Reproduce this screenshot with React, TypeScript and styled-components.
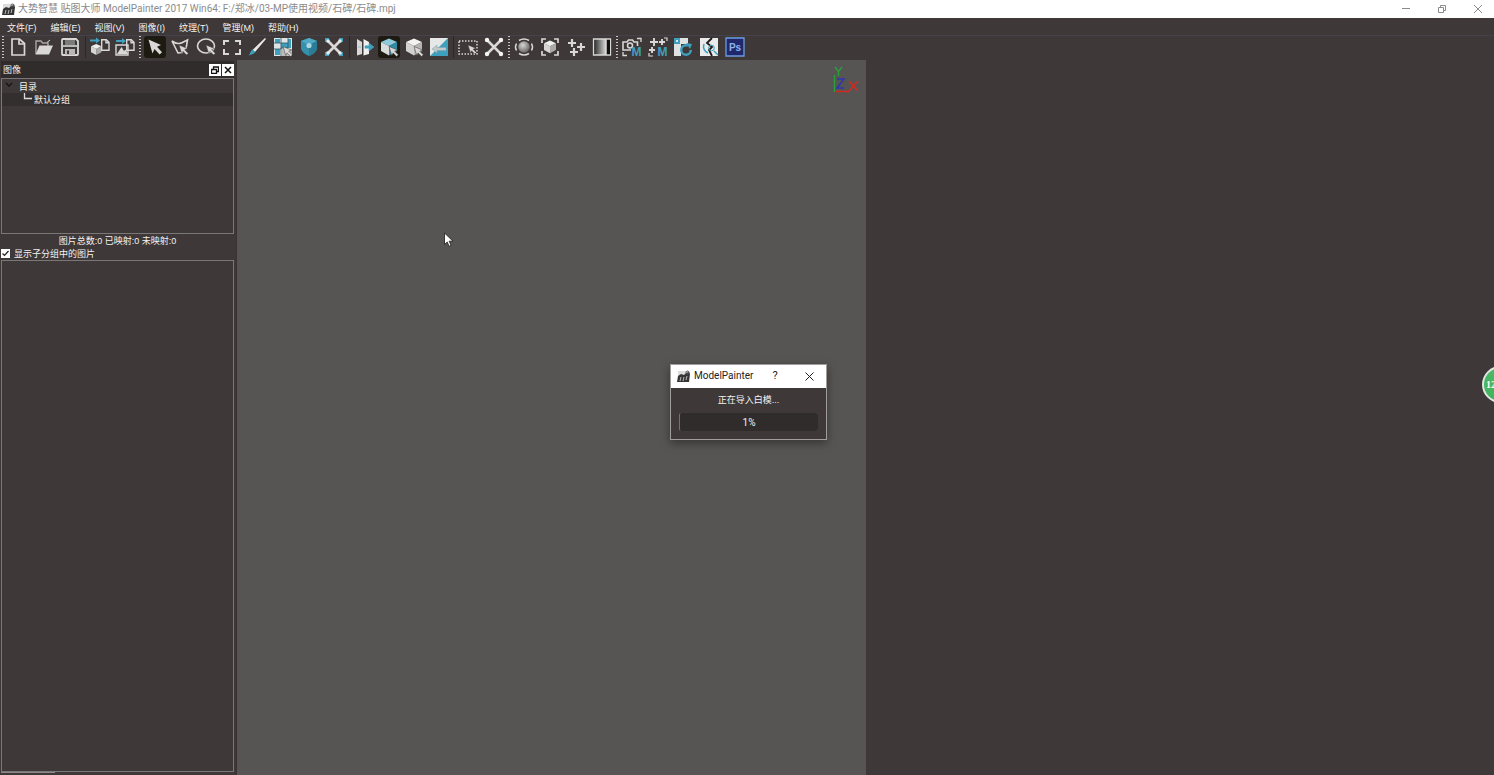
import React from 'react';
import styled, { createGlobalStyle, css } from 'styled-components';

const color = {
  chrome: '#3e3838',
  dark: '#2f2c2b',
  view: '#565553',
  line: '#7b7776',
  text: '#f4f2f1',
  icon: '#d9d8d6',
  teal: '#3fa0bd',
};

const titleFont = "Roboto, 'Noto Sans CJK SC', sans-serif";
const uiFont = "'Liberation Sans', 'Noto Sans CJK SC', sans-serif";

const GlobalStyle = createGlobalStyle`
  * { box-sizing: border-box; }
  html, body, #root { height: 100%; }
  body { margin: 0; overflow: hidden; background: ${color.chrome}; }
  button, input { font: inherit; color: inherit; }
`;

const Window = styled.div`
  position: relative;
  display: flex;
  flex-direction: column;
  height: 100vh;
  overflow: hidden;
  background: ${color.chrome};
  color: ${color.text};
  font: 9px/14px ${uiFont};
  white-space: nowrap;
  cursor: default;
`;

const TitleBar = styled.header`
  display: flex;
  align-items: center;
  height: 18px;
  flex: none;
  padding-left: 2px;
  gap: 3px;
  background: #fff;
  color: #8b8b8b;
  font: 10px/18px ${titleFont};
`;

const TitleText = styled.h1`
  flex: 1;
  margin: 0;
  font: inherit;
`;

const CaptionButton = styled.button`
  display: grid;
  place-items: center;
  width: 33px;
  height: 16px;
  padding: 0;
  border: 0;
  background: none;
`;

const MenuBar = styled.nav`
  display: flex;
  align-items: center;
  gap: 14px;
  height: 18px;
  flex: none;
  padding: 2px 7px 0;
  border-bottom: 1px solid #45414a;
`;

const MenuItem = styled.button`
  padding: 0;
  border: 0;
  background: none;
  line-height: 16px;
`;

const ToolBar = styled.div`
  display: flex;
  align-items: center;
  height: 24px;
  flex: none;
  padding: 0 0 2px 1px;
`;

const ToolGroup = styled.div<{ $width: number }>`
  display: flex;
  width: ${p => p.$width}px;
`;

const ToolSlot = styled.div`
  flex: 1;
  display: flex;
  justify-content: center;
`;

const ToolButton = styled.button<{ $active?: boolean }>`
  display: grid;
  place-items: center;
  width: 22px;
  height: 22px;
  padding: 0;
  border: 0;
  border-radius: 3px;
  background: ${p => (p.$active ? '#1d1a12' : 'none')};
  svg {
    overflow: visible;
  }
`;

const Divider = styled.div<{ $dotted?: boolean }>`
  width: 4px;
  height: 22px;
  ${p =>
    p.$dotted
      ? css`
          background: repeating-linear-gradient(#c9c7c6 0 1px, transparent 1px 3px) 1px 0 / 2px 100% no-repeat;
        `
      : css`
          background: linear-gradient(#2c2827, #2c2827) 2px 0 / 1px 100% no-repeat;
        `}
`;

const Workspace = styled.main`
  display: flex;
  flex: 1;
  min-height: 0;
`;

const Dock = styled.aside`
  display: flex;
  flex-direction: column;
  width: 237px;
  flex: none;
  padding: 1px 2px 2px 1px;
  border-right: 1px solid #383332;
`;

const DockHeader = styled.div`
  display: flex;
  align-items: center;
  height: 17px;
  padding: 0 0 0 2px;
  background: ${color.dark};
`;

const DockTitle = styled.h2`
  flex: 1;
  margin: 0;
  font: inherit;
`;

const DockButton = styled.button`
  display: grid;
  place-items: center;
  width: 12px;
  height: 12px;
  margin-left: 1px;
  padding: 0;
  border: 0;
  background: #fff;
`;

const Panel = styled.div<{ $grow?: boolean }>`
  border: 1px solid ${color.line};
  ${p => (p.$grow ? 'flex: 1;' : 'height: 156px; flex: none;')}
`;

const Tree = styled.ul`
  margin: 0;
  padding: 1px 0 0;
  list-style: none;
  line-height: 15px;
`;

const TreeRow = styled.li<{ $selected?: boolean }>`
  display: flex;
  height: 13px;
  padding-left: ${p => (p.$selected ? 21 : 2)}px;
  gap: ${p => (p.$selected ? 1 : 5)}px;
  background: ${p => (p.$selected ? '#342f2f' : 'none')};
`;

const Stats = styled.p`
  margin: 0;
  height: 13px;
  text-align: center;
`;

const CheckLabel = styled.label`
  display: flex;
  align-items: center;
  gap: 4px;
  height: 13px;
`;

const CheckInput = styled.input`
  appearance: none;
  width: 9px;
  height: 9px;
  margin: 0;
  background: #fff;
  &:not(:checked) + svg {
    display: none;
  }
`;

const CheckBox = styled.span`
  position: relative;
  display: flex;
  svg {
    position: absolute;
    inset: 0;
    pointer-events: none;
  }
`;

const ScrollHint = styled.div`
  width: 54px;
  height: 1px;
  flex: none;
  background: #8c8887;
`;

const Viewport = styled.section`
  position: relative;
  flex: 1;
  background: ${color.view};
`;

const SidePane = styled.section`
  flex: 1;
  background: ${color.chrome};
`;

const AxisGizmo = styled.svg`
  position: absolute;
  top: 6px;
  right: 6px;
`;

const Pointer = styled.svg`
  position: absolute;
  left: 206px;
  top: 172px;
`;

const Dialog = styled.div`
  position: absolute;
  left: calc(50% - 77px);
  top: 47%;
  width: 157px;
  border: 1px solid #a09d9c;
  background: ${color.chrome};
  box-shadow: 0 3px 9px rgba(0, 0, 0, 0.4);
`;

const DialogBar = styled.div`
  display: flex;
  align-items: center;
  height: 23px;
  padding: 0 0 1px 6px;
  gap: 4px;
  background: #fff;
  color: #222;
  font: 10px/22px ${titleFont};
`;

const DialogTitle = styled.h2`
  width: 62px;
  margin: 0;
  font: inherit;
`;

const DialogButton = styled.button`
  display: grid;
  place-items: center;
  width: 30px;
  height: 22px;
  padding: 0;
  border: 0;
  background: none;
  font-size: 11px;
  line-height: 22px;
`;

const DialogBody = styled.div`
  padding: 5px 8px 8px;
  text-align: center;
`;

const DialogText = styled.p`
  margin: 0 0 5px;
  line-height: 15px;
`;

const Progress = styled.div`
  height: 18px;
  border-left: 1px solid #77726f;
  border-radius: 2px 4px 4px 2px;
  background: ${color.dark};
  font: 10px/19px ${titleFont};
`;

const Badge = styled.button`
  position: absolute;
  right: -25px;
  top: 366px;
  width: 37px;
  height: 37px;
  padding: 0 0 0 2px;
  border: 2px solid #e2e6e2;
  border-radius: 50%;
  background: linear-gradient(#4cb866, #3fb45a);
  color: #fff;
  font: bold 10px/30px 'Liberation Serif', serif;
  text-align: left;
`;

const c = color.icon;
const t = color.teal;
const arrow = (x: number, y: number, s = 1) => (
  <path
    transform={`translate(${x} ${y}) scale(${s})`}
    d="M0 0l8.500 3.500-2.800 1.200 3.600 3.600-1.700 1.700-3.600-3.600L2.800 9z"
    fill={c}
    stroke="#3e3838"
    strokeWidth=".5"
  />
);
const cube = (x: number, y: number, s: number, l = '#d6d5d4', r = '#aaa9a8', top = '#efefee') => (
  <g transform={`translate(${x} ${y}) scale(${s})`}>
    <path d="M8 0l8 3.500-8 4-8-4z" fill={top} />
    <path d="M0 3.500l8 4V17l-8-4.500z" fill={l} />
    <path d="M16 3.500l-8 4V17l8-4.500z" fill={r} />
  </g>
);
const pageShape = (x: number, y: number) => (
  <g transform={`translate(${x} ${y})`} fill="none" stroke={c} strokeWidth="1.400">
    <path d="M.7.7h4.600l2.700 2.700v7.900H.7z" />
    <path d="M5 .7v3h3" />
  </g>
);
const bigM = (
  <text x="9.500" y="19" fontFamily="Liberation Sans" fontSize="12" fontWeight="bold" fill={t}>
    M
  </text>
);

const icons: Record<string, React.ReactNode> = {
  new: (
    <g fill="none" stroke={c} strokeWidth="1.700">
      <path d="M4 2h7.500L16.500 6.500V18H4z" />
      <path d="M11 2v5h5" />
    </g>
  ),
  open: (
    <>
      <path d="M2 17V4h5l1.500 2H14v3" fill="none" stroke="#a9a7a5" strokeWidth="1.400" />
      <path d="M5.500 8.500H19L15 17.500H1.500z" fill={c} />
      <path d="M13 5.500l3-2.500" stroke={c} />
    </>
  ),
  save: (
    <>
      <path d="M2 3q0-1 1-1h13l2 2v13q0 1-1 1H3q-1 0-1-1z" fill="none" stroke={c} strokeWidth="1.800" />
      <path d="M5 3h10v5H5z" fill="#7d7b7a" />
      <path d="M3 9h14" stroke={c} strokeWidth="1.600" />
      <path d="M5 12h10v6H5z" fill="#b9b7b6" />
      <path d="M7 13.500h2V17H7z" fill="#3e3838" />
    </>
  ),
  importModel: (
    <>
      {cube(1, 7, 0.65)}
      <path d="M0 3.500h7" stroke={t} strokeWidth="2" />
      <path d="M6 .5l4 3-4 3z" fill={t} />
      {pageShape(11, 2)}
    </>
  ),
  importImage: (
    <>
      <path d="M1 8h12v10H1z" fill="none" stroke={c} strokeWidth="1.400" />
      <path d="M2 17l4.500-7 2.500 4 1.500-1.500L13 17z" fill={c} />
      <path d="M1 4h7" stroke={t} strokeWidth="2" />
      <path d="M7 1l4 3-4 3z" fill={t} />
      {pageShape(11, 2)}
    </>
  ),
  select: <path d="M3.500 2.500L16 8l-4 1.800 5 5.400-2.400 2.400L9.500 12l-2 4.500z" fill={c} />,
  lasso: (
    <>
      <path d="M13 15.500L8 16 2 4q4 3 7 2.500T17.500 3L16 12" fill="none" stroke={c} strokeWidth="1.600" />
      {arrow(9, 8)}
    </>
  ),
  circle: (
    <>
      <ellipse cx="10" cy="9" rx="8.500" ry="7" fill="none" stroke={c} strokeWidth="1.600" />
      {arrow(10, 8)}
    </>
  ),
  rect: <path d="M2 8V4h5M13 4h5v4M18 12v5h-5M7 17H2v-5" fill="none" stroke={c} strokeWidth="2" />,
  brush: (
    <>
      <path d="M18 1l1 1L8 15l-2.500-2z" fill="#e9e8e7" />
      <path d="M5.500 12.500l3 2.500Q6 18 1.500 18.500 3 17 3.500 15z" fill={t} />
    </>
  ),
  mosaic: (
    <>
      <path d="M1 1h18v18H1z" fill="#dfe4e4" />
      <path d="M2 2h5v4H2zM8 6h7v5H8zM2 12h5v6H2zM15 2h3v9h-3z" fill={t} />
      <path d="M8 1v5H1M8 6v6H1M15 1v5H8M15 6v5H8v8" fill="none" stroke="#2d5664" strokeWidth=".8" />
      <path d="M9 12h10v7H9z" fill="#b9bcbb" />
      {arrow(10, 9.500)}
    </>
  ),
  shield: (
    <>
      <path d="M10 1l8 3v8q-2 5-8 7-6-2-8-7V4z" fill="#3590ac" />
      <path d="M10 1l8 3-8 4-8-4z" fill="#4fa9c4" />
      <path d="M10 8l8-4v8q-2 5-8 7z" fill="#2a7c97" />
      <circle cx="10" cy="8.500" r="2.600" fill="#a9d6e2" />
    </>
  ),
  crossTeal: (
    <>
      <path d="M4 4l12 12M16 4L4 16" stroke={c} strokeWidth="2.800" />
      <path d="M1 1h4v4H1zM15 1h4v4h-4zM1 15h4v4H1zM15 15h4v4h-4z" fill={t} />
      <path d="M2.500 2.500h3v3h-3zM14.500 2.500h3v3h-3zM2.500 14.500h3v3h-3zM14.500 14.500h3v3h-3z" fill="#eee" />
    </>
  ),
  flip: (
    <>
      <path d="M3 2l5 3v12l-5 1.500z" fill={c} />
      <path d="M9.500 2l5.500 3v12l-5.500 1.500z" fill="#f0f0ef" />
      <path d="M4 10h3M11 8.800h4V6l5 4-5 4v-2.800h-4z" fill={t} stroke={t} strokeWidth=".5" />
    </>
  ),
  cubeTeal: (
    <>
      {cube(2, 1.500, 1, '#d9dddd', '#2f8ba8', '#8ecadb')}
      {arrow(10, 9.500)}
    </>
  ),
  cube: (
    <>
      {cube(2, 1.500, 1, '#d3d2d1', '#b5b4b3', '#f2f2f1')}
      {arrow(10, 9.500)}
    </>
  ),
  split: (
    <>
      <path d="M1 1h18v18H1z" fill={t} />
      <path d="M19 1v18L1 1z" fill="#e6e8e8" transform="rotate(-90 10 10)" />
      <path d="M3 12l5-4v2.500h9v3H8V16z" fill="#c3c8c8" stroke="#7fa4ae" strokeWidth=".5" />
    </>
  ),
  dottedRect: (
    <>
      <path d="M1 4h18v13H1z" fill="none" stroke={c} strokeWidth="1.500" strokeDasharray="1.500 1.500" />
      {arrow(10, 8, 0.9)}
    </>
  ),
  cross: (
    <>
      <path d="M3 3l14 14M17 3L3 17" stroke={c} strokeWidth="2.600" />
      <g fill="#f4f4f3">
        <circle cx="3" cy="3" r="2.200" />
        <circle cx="17" cy="3" r="2.200" />
        <circle cx="3" cy="17" r="2.200" />
        <circle cx="17" cy="17" r="2.200" />
      </g>
    </>
  ),
  sphere: (
    <>
      <circle cx="10" cy="10" r="5.800" fill="url(#ball)" />
      <path d="M5 3.500Q10 .5 15 3.500M5 16.500q5 3 10 0M2.500 6.500Q.5 10 2.500 13.500M17.500 6.500q2 3.500 0 7" fill="none" stroke={c} strokeWidth="1.500" />
    </>
  ),
  frameCube: (
    <>
      <path d="M2 6V2h4M14 2h4v4M18 14v4h-4M6 18H2v-4" fill="none" stroke={c} strokeWidth="1.700" />
      {cube(4, 3.500, 0.75)}
    </>
  ),
  points: (
    <path d="M6 2v8M2 6h8M15 6v8M11 10h8M8 11v8M4 15h8" fill="none" stroke={c} strokeWidth="2.200" />
  ),
  gradient: (
    <>
      <path d="M1.500 2h17v16h-17z" fill="url(#ramp)" stroke={c} strokeWidth="1.300" />
      <path d="M14.500 2.700H18v14.600h-3.500z" fill="#111" />
      <path d="M14 2v16" stroke={c} />
    </>
  ),
  cameraM: (
    <>
      <path d="M9 13H1V5h4l1.500-2h4L12 5h3.500v4" fill="none" stroke={c} strokeWidth="1.600" />
      <circle cx="8" cy="8.500" r="2.500" fill="none" stroke={c} strokeWidth="1.500" />
      <path d="M15 1.500h4V5M1 15v3.500h4" fill="none" stroke={c} strokeWidth="1.300" />
      {bigM}
    </>
  ),
  pointsM: (
    <>
      <path d="M6 1v8M2 5h8M11 5h6M14 2v6M4 10v6M1 13h6" fill="none" stroke={c} strokeWidth="1.900" />
      <path d="M16 1h3v3M1 16v3h4" fill="none" stroke={c} strokeWidth="1.200" />
      {bigM}
    </>
  ),
  refresh: (
    <>
      <path d="M1 1h14v6H8v12H1z" fill="#dfe2e2" />
      <path d="M1 1h6v6H1z" fill={t} />
      <path d="M3 3h2v2H3z" fill="#dfe2e2" />
      <circle cx="13" cy="13" r="4.800" fill="none" stroke={t} strokeWidth="2.400" strokeDasharray="24 6" />
      <path d="M13 6l6 1-2 5z" fill={t} />
    </>
  ),
  crack: (
    <>
      <path d="M1 1h18v18H1z" fill="#e9ebea" />
      <path d="M13 1L8 6l5 4-3 3 3 6" fill="none" stroke="#1d1b1a" strokeWidth="1.800" />
      <path d="M5 7a7 7 0 0 0 4 9M15 14l4 4" fill="none" stroke={t} strokeWidth="1.500" />
      <circle cx="12.500" cy="11" r="2.800" fill="none" stroke={t} />
    </>
  ),
  photoshop: (
    <>
      <path d="M1 1h18v18H1z" fill="#20286c" stroke="#6d9be0" strokeWidth="1.300" />
      <text x="10" y="14" textAnchor="middle" fontFamily="Liberation Sans" fontSize="10" fontWeight="bold" fill="#8db4ee">
        Ps
      </text>
    </>
  ),
};

type Tool = { id: string; label: string; active?: boolean };
type Group = { width: number; dotted?: boolean; tools: Tool[] };

const groups: Group[] = [
  { width: 78, dotted: true, tools: [{ id: 'new', label: '新建' }, { id: 'open', label: '打开' }, { id: 'save', label: '保存' }] },
  { width: 51, tools: [{ id: 'importModel', label: '导入白模' }, { id: 'importImage', label: '导入图像' }] },
  {
    width: 205,
    dotted: true,
    tools: [
      { id: 'select', label: '选择', active: true },
      { id: 'lasso', label: '多边形套索' },
      { id: 'circle', label: '圆形套索' },
      { id: 'rect', label: '矩形选择' },
      { id: 'brush', label: '画笔' },
      { id: 'mosaic', label: '纹理块' },
      { id: 'shield', label: '保护' },
      { id: 'crossTeal', label: '清除' },
    ],
  },
  {
    width: 100,
    tools: [
      { id: 'flip', label: '翻转' },
      { id: 'cubeTeal', label: '纹理显示', active: true },
      { id: 'cube', label: '白模显示' },
      { id: 'split', label: '切换' },
    ],
  },
  { width: 52, tools: [{ id: 'dottedRect', label: '框选' }, { id: 'cross', label: '取消选择' }] },
  {
    width: 104,
    dotted: true,
    tools: [
      { id: 'sphere', label: '旋转' },
      { id: 'frameCube', label: '居中' },
      { id: 'points', label: '控制点' },
      { id: 'gradient', label: '渐变' },
    ],
  },
  {
    width: 129,
    dotted: true,
    tools: [
      { id: 'cameraM', label: '相机映射' },
      { id: 'pointsM', label: '控制点映射' },
      { id: 'refresh', label: '更新纹理' },
      { id: 'crack', label: '修补' },
      { id: 'photoshop', label: 'Photoshop' },
    ],
  },
];

const menus = ['文件(F)', '编辑(E)', '视图(V)', '图像(I)', '纹理(T)', '管理(M)', '帮助(H)'];

const AppLogo = () => (
  <svg width="13" height="13" viewBox="0 0 13 13" aria-hidden="true">
    <path d="M1 1h11v7H1z" fill="#dcdcdc" />
    <path d="M0 12l1-6 3-2 3 1 2-2 3-1 1 2-1 8z" fill="#353535" />
    <path d="M3 11l1-4M6 11l1-4M9 10l1-4" stroke="#b9b9b9" />
    <circle cx="10.500" cy="2.500" r="1.500" fill="none" stroke="#555" />
  </svg>
);

export default function App() {
  return (
    <Window>
      <GlobalStyle />
      <TitleBar>
        <AppLogo />
        <TitleText>大势智慧 贴图大师 ModelPainter 2017 Win64: F:/郑冰/03-MP使用视频/石碑/石碑.mpj</TitleText>
        <CaptionButton aria-label="最小化">
          <svg width="10" height="10" viewBox="0 0 10 10" fill="none" stroke="#8b8b8b">
            <path d="M1 4.500h8" />
          </svg>
        </CaptionButton>
        <CaptionButton aria-label="还原">
          <svg width="10" height="10" viewBox="0 0 10 10" fill="none" stroke="#8b8b8b">
            <path d="M1.500 3.500h5v5h-5zM3.500 3.500v-2h5v5h-2" />
          </svg>
        </CaptionButton>
        <CaptionButton aria-label="关闭">
          <svg width="10" height="10" viewBox="0 0 10 10" fill="none" stroke="#8b8b8b">
            <path d="M1 1l8 8M9 1L1 9" />
          </svg>
        </CaptionButton>
      </TitleBar>

      <MenuBar>
        {menus.map(m => (
          <MenuItem key={m}>{m}</MenuItem>
        ))}
      </MenuBar>

      <ToolBar role="toolbar">
        <svg width="0" height="0" aria-hidden="true">
          <linearGradient id="ramp">
            <stop offset="0" stopColor="#222" />
            <stop offset=".75" stopColor="#ddd" />
          </linearGradient>
          <radialGradient id="ball" cx=".4" cy=".35" r=".65">
            <stop offset="0" stopColor="#d6d5d4" />
            <stop offset="1" stopColor="#6b6867" />
          </radialGradient>
        </svg>
        {groups.map((g, i) => (
          <React.Fragment key={i}>
            <Divider $dotted={g.dotted} />
            <ToolGroup $width={g.width}>
              {g.tools.map(tool => (
                <ToolSlot key={tool.id}>
                  <ToolButton $active={tool.active} aria-label={tool.label}>
                    <svg width="20" height="20" viewBox="0 0 20 20">
                      {icons[tool.id]}
                    </svg>
                  </ToolButton>
                </ToolSlot>
              ))}
            </ToolGroup>
          </React.Fragment>
        ))}
      </ToolBar>

      <Workspace>
        <Dock>
          <DockHeader>
            <DockTitle>图像</DockTitle>
            <DockButton aria-label="浮动">
              <svg width="8" height="8" viewBox="0 0 8 8" fill="none" stroke="#111">
                <path d="M.5 3.500h5v4h-5zM2.500 3V1h5v4.500H6" strokeWidth="1.300" />
              </svg>
            </DockButton>
            <DockButton aria-label="关闭面板">
              <svg width="8" height="8" viewBox="0 0 8 8" fill="none" stroke="#111">
                <path d="M1 1l6 6M7 1L1 7" strokeWidth="1.500" />
              </svg>
            </DockButton>
          </DockHeader>
          <Panel>
            <Tree>
              <TreeRow>
                <svg width="10" height="10" viewBox="0 0 10 10" fill="none" stroke="#151313">
                  <path d="M2 3l3 3 3-3" strokeWidth="1.300" />
                </svg>
                目录
              </TreeRow>
              <TreeRow $selected>
                <svg width="10" height="13" viewBox="0 0 10 13" fill="none" stroke="#dedcdb">
                  <path d="M1.500 0v5.500H9" strokeWidth="1.300" />
                </svg>
                默认分组
              </TreeRow>
            </Tree>
          </Panel>
          <Stats>图片总数:0 已映射:0 未映射:0</Stats>
          <CheckLabel>
            <CheckBox>
              <CheckInput type="checkbox" defaultChecked />
              <svg width="9" height="9" viewBox="0 0 9 9" fill="none" stroke="#222">
                <path d="M1.500 4.500l2 2 4-4.500" strokeWidth="1.200" />
              </svg>
            </CheckBox>
            显示子分组中的图片
          </CheckLabel>
          <Panel $grow />
          <ScrollHint />
        </Dock>

        <Viewport>
          <Pointer width="12" height="16" viewBox="0 0 12 16">
            <path d="M1.500 1v11.500l2.700-2.500 1.900 4.300 2-.9-1.900-4.200H10z" fill="#fff" stroke="#1b1b1b" strokeWidth=".8" />
          </Pointer>
          <AxisGizmo width="28" height="30" viewBox="0 0 28 30" fill="none" strokeWidth="1.400">
            <path d="M2.500 26V9M3 1l3.500 4.500L10 1M6.500 5.500V10" stroke="#27a03a" />
            <path d="M5 13h7L5 22h7" stroke="#2b34b5" />
            <path d="M3 25.500h15M17 15l9 10M26 15l-9 10" stroke="#d6281f" />
          </AxisGizmo>
        </Viewport>
        <SidePane />
      </Workspace>

      <Dialog role="dialog" aria-label="ModelPainter">
        <DialogBar>
          <AppLogo />
          <DialogTitle>ModelPainter</DialogTitle>
          <DialogButton aria-label="帮助">?</DialogButton>
          <DialogButton aria-label="关闭">
            <svg width="9" height="9" viewBox="0 0 9 9" fill="none" stroke="#222">
              <path d="M.5.5l8 8M8.500.5l-8 8" />
            </svg>
          </DialogButton>
        </DialogBar>
        <DialogBody>
          <DialogText>正在导入白模...</DialogText>
          <Progress role="progressbar" aria-valuenow={1} aria-valuemin={0} aria-valuemax={100}>
            1%
          </Progress>
        </DialogBody>
      </Dialog>

      <Badge>12</Badge>
    </Window>
  );
}
